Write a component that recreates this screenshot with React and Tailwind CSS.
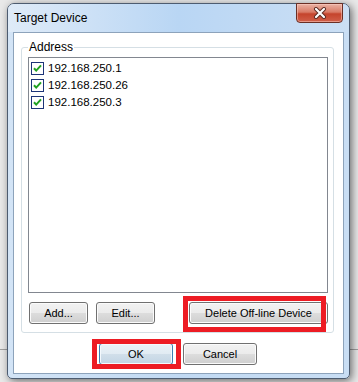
import React from 'react';

const devices = ['192.168.250.1', '192.168.250.26', '192.168.250.3'];

const btn =
  'flex items-center justify-center h-[22px] rounded-[3px] border border-[#707070] text-[11px] text-black bg-[linear-gradient(to_bottom,#f2f2f2_0%,#ebebeb_50%,#dddddd_50%,#cfcfcf_100%)] shadow-[inset_0_0_0_1px_#fbfbfb]';

const okBtn =
  'flex items-center justify-center h-[22px] rounded-[3px] border border-[#3c7fb1] text-[11px] text-black bg-[linear-gradient(to_bottom,#eaf2f8_0%,#e1ebf3_50%,#d1dfea_50%,#c3d5e4_100%)] shadow-[inset_0_0_0_1px_#f4f9fd]';

const CheckBox = () => (
  <svg width="13" height="13" viewBox="0 0 13 13">
    <rect x="0.5" y="0.5" width="12" height="12" fill="#ffffff" stroke="#1c3478" />
    <path d="M3 6.2 L5.2 8.6 L10 3.4" fill="none" stroke="#21a121" strokeWidth="2" />
  </svg>
);

const CloseGlyph = () => (
  <svg width="14" height="12" viewBox="0 0 14 12">
    <path d="M3 2 L11 10 M11 2 L3 10" stroke="#5a2a22" strokeWidth="4" strokeLinecap="round" />
    <path d="M3 2 L11 10 M11 2 L3 10" stroke="#ffffff" strokeWidth="2.2" strokeLinecap="round" />
  </svg>
);

export default function App() {
  return (
    <div className="relative w-[358px] h-[382px] overflow-hidden bg-[#e9e9e9] font-['Liberation_Sans',Arial,sans-serif]">
      {/* lines of the window behind */}
      <div className="absolute left-0 top-[349px] w-[358px] h-px bg-[#a0a0a0]" />

      <div className="relative ml-[7px] mt-[3px] w-[343px] h-[376px] flex flex-col rounded-t-[7px] rounded-b-[5px] border border-[#4d5c70] bg-[linear-gradient(to_right,#d3e4f6,#c2daf3_50%,#c9def4)] shadow-[2px_2px_8px_rgba(0,0,0,0.55)]">
        {/* title bar */}
        <div className="flex h-[28px] items-start justify-between bg-[linear-gradient(to_right,#dfebf8,#b9d6f4_50%,#cbdff4)] rounded-t-[6px]">
          <span className="pl-[6px] pt-[7px] text-[12px] leading-[14px] text-black">Target Device</span>
          <div className="-mt-px mr-[6px] flex h-[20px] w-[47px] items-center justify-center rounded-b-[4px] border border-[#6a2f25] bg-[linear-gradient(to_bottom,#eab2a4_0%,#d97b66_45%,#c5442c_55%,#d0604a_100%)] shadow-[inset_0_0_0_1px_rgba(255,210,200,0.5)]">
            <CloseGlyph />
          </div>
        </div>

        {/* client area */}
        <div className="mx-[5px] h-[342px] border border-[#8da3bb] bg-white">
          {/* group box */}
          <div className="relative ml-[7px] mt-[14px] w-[313px] h-[286px] rounded-[3px] border border-[#d5dfe5]">
            <span className="absolute left-[6px] -top-[8px] bg-white px-[1px] text-[12px] leading-[14px] text-black">Address</span>

            <div className="ml-[6px] mt-[9px] w-[300px] h-[236px] border border-[#828790] bg-white pt-[2px]">
              {devices.map((d) => (
                <div key={d} className="flex h-[17px] items-center gap-[4px] pl-[2px]">
                  <CheckBox />
                  <span className="text-[11.5px] leading-[13px] text-black">{d}</span>
                </div>
              ))}
            </div>

            <div className="mt-[9px] flex pl-[7px]">
              <div className={`${btn} w-[59px]`}>Add...</div>
              <div className={`${btn} ml-[8px] w-[59px]`}>Edit...</div>
              <div className={`${btn} ml-[34px] w-[139px]`}>Delete Off-line Device</div>
            </div>
          </div>

          <div className="mt-[10px] flex pl-[85px]">
            <div className={`${okBtn} w-[74px]`}>OK</div>
            <div className={`${btn} ml-[10px] w-[74px]`}>Cancel</div>
          </div>
        </div>
      </div>

      {/* red highlight marks */}
      <div className="absolute left-[183px] top-[296px] w-[143px] h-[36px] border-[5px] border-[#ed1c24]" />
      <div className="absolute left-[92px] top-[339px] w-[89px] h-[30px] border-[5px] border-[#ed1c24]" />
    </div>
  );
}
